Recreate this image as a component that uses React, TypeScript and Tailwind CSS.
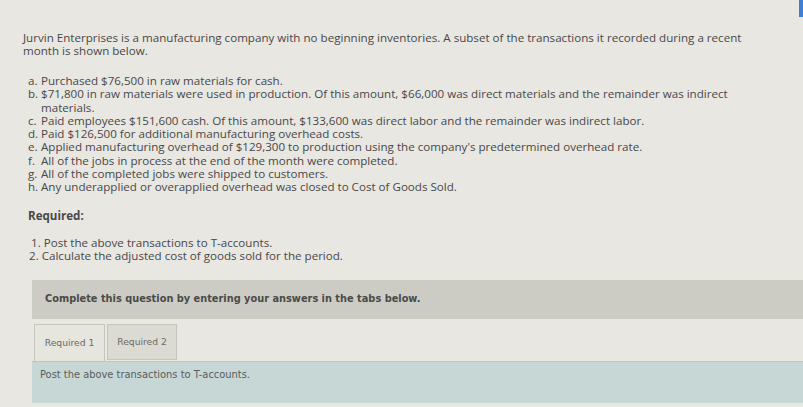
const items: { label: string; lines: string[] }[] = [
  { label: "a.", lines: ["Purchased $76,500 in raw materials for cash."] },
  {
    label: "b.",
    lines: [
      "$71,800 in raw materials were used in production. Of this amount, $66,000 was direct materials and the remainder was indirect",
      "materials.",
    ],
  },
  {
    label: "c.",
    lines: ["Paid employees $151,600 cash. Of this amount, $133,600 was direct labor and the remainder was indirect labor."],
  },
  { label: "d.", lines: ["Paid $126,500 for additional manufacturing overhead costs."] },
  {
    label: "e.",
    lines: ["Applied manufacturing overhead of $129,300 to production using the company's predetermined overhead rate."],
  },
  { label: "f.", lines: ["All of the jobs in process at the end of the month were completed."] },
  { label: "g.", lines: ["All of the completed jobs were shipped to customers."] },
  { label: "h.", lines: ["Any underapplied or overapplied overhead was closed to Cost of Goods Sold."] },
];

export default function App() {
  return (
    <div className="relative w-[803px] h-[407px] overflow-hidden bg-[#e8e7e1] text-[#48484a] font-['Open_Sans',sans-serif]">
      {/* blue edge at top right */}
      <div className="absolute right-0 top-0 w-[4px] h-[17px] bg-[#3d7fd6]" />

      <div className="pt-[32px] pl-[23px]">
        <p className="text-[11.6px] leading-[12.5px] whitespace-nowrap">
          Jurvin Enterprises is a manufacturing company with no beginning inventories. A subset of the transactions it recorded during a recent
          <br />
          month is shown below.
        </p>

        <ul className="mt-[17px] pl-[5px] text-[11.6px] leading-[13.3px]">
          {items.map((it) => (
            <li key={it.label} className="flex whitespace-nowrap">
              <span className="w-[13px] shrink-0">{it.label}</span>
              <span>
                {it.lines.map((l, i) => (
                  <span key={i} className="block">
                    {l}
                  </span>
                ))}
              </span>
            </li>
          ))}
        </ul>

        <div className="mt-[15px] pl-[5px] text-[11.6px] leading-[13px] font-bold">Required:</div>

        <ol className="mt-[14px] pl-[8px] text-[11.6px] leading-[13px]">
          <li>1. Post the above transactions to T-accounts.</li>
          <li className="-ml-[2px]">2. Calculate the adjusted cost of goods sold for the period.</li>
        </ol>
      </div>

      <div className="mt-[18px] pl-[32px] font-['DejaVu_Sans',sans-serif]">
        <div className="h-[39px] flex items-center pl-[13px] bg-[#cdccc4] text-[9.8px] font-bold text-[#4a4a48]">
          Complete this question by entering your answers in the tabs below.
        </div>

        <div className="mt-[5px] flex gap-[2px] pl-[2px]">
          <button className="w-[71px] h-[37px] flex items-center justify-center bg-[#e6e5de] border border-b-0 border-[#c6c5be] text-[9.2px] text-[#6a6a68]">
            Required 1
          </button>
          <button className="w-[70px] h-[36px] flex items-center justify-center bg-[#dcdbd3] border border-[#c6c5bd] text-[9.2px] text-[#6a6a68]">
            Required 2
          </button>
        </div>

        <div className="h-[42px] pl-[8px] pt-[6px] bg-[#c7d7d6] border-t border-[#b9c6c5] text-[9.9px] text-[#5a5c5c]">
          Post the above transactions to T-accounts.
        </div>
      </div>
    </div>
  );
}
